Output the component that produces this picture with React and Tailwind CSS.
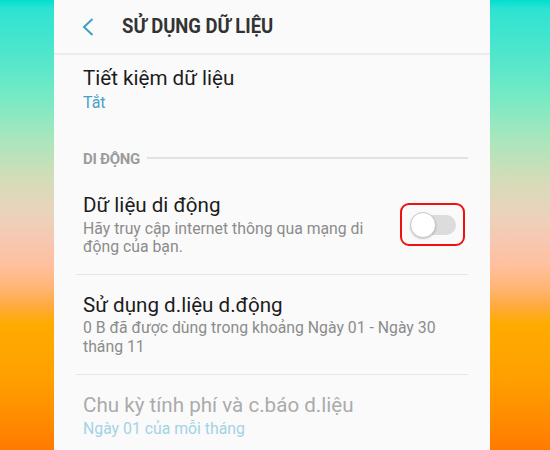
import React from "react";

const sideBg =
  "bg-[linear-gradient(to_bottom,#00dfcf_0%,#2ee3d1_2%,#4fe6cc_12%,#78eac4_22%,#a9e6bd_31%,#d4dcb8_40%,#e9d4bb_47%,#f6c8b3_53%,#ffc09e_59%,#ffb574_64%,#ffab3e_68%,#ffab00_72%,#ffa000_84%,#ff8a00_94%,#ff7a00_100%)]";

const Toggle = () => (
  <div className="w-[65px] h-[43px] border-2 border-[#ee1111] rounded-[9px] flex items-center justify-center">
    <div className="relative w-[46px] h-[26px] flex items-center">
      <div className="ml-[6px] w-[40px] h-[20px] rounded-full bg-[#dcdcdc]" />
      <div className="absolute left-0 top-0 w-[26px] h-[26px] rounded-full bg-white border border-[#c8c8c8] shadow-[0_1px_2px_rgba(0,0,0,0.2)]" />
    </div>
  </div>
);

export default function App() {
  return (
    <div
      className="w-[550px] h-[450px] flex overflow-hidden"
      style={{ fontFamily: "Roboto, 'Noto Sans', sans-serif" }}
    >
      <div className={`w-[54px] h-full ${sideBg}`} />

      <div className="w-[436px] h-full bg-[#fafafa] flex flex-col">
        {/* header */}
        <div className="h-[53px] flex items-center border-b-2 border-[#ececec] box-content">
          <svg
            width="12"
            height="18"
            viewBox="0 0 12 18"
            className="ml-[28px] mt-[1px]"
            fill="none"
            stroke="#3e9fc3"
            strokeWidth="2"
          >
            <path d="M10.5 1 L2 9 L10.5 17" />
          </svg>
          <div className="ml-[28px] text-[21px] font-bold text-[#333] leading-none scale-x-[0.88] origin-left whitespace-nowrap">
            SỬ DỤNG DỮ LIỆU
          </div>
        </div>

        {/* Tiết kiệm dữ liệu */}
        <div className="pl-[29px] pt-[11px]">
          <div className="text-[20.6px] leading-[24px] text-[#1c1c1c]">
            Tiết kiệm dữ liệu
          </div>
          <div className="mt-[3px] text-[16px] leading-[19px] text-[#4a9ec6]">
            Tắt
          </div>
        </div>

        {/* section */}
        <div className="mt-[38px] pl-[29px] pr-[22px] flex items-center gap-[7px]">
          <div className="text-[15px] leading-[18px] font-bold text-[#9c9c9c] whitespace-nowrap tracking-[-0.3px]">
            DI ĐỘNG
          </div>
          <div className="flex-1 h-[2px] bg-[#e2e2e2] -mt-[3px]" />
        </div>

        {/* Dữ liệu di động */}
        <div className="mt-[25px] pl-[29px] pr-[25px] flex items-start justify-between">
          <div>
            <div className="text-[20.6px] leading-[24px] text-[#1c1c1c]">
              Dữ liệu di động
            </div>
            <div className="mt-[3px] text-[15.8px] leading-[18px] text-[#8c8c8c] w-[300px]">
              Hãy truy cập internet thông qua mạng di động của bạn.
            </div>
          </div>
          <div className="mt-[10px]">
            <Toggle />
          </div>
        </div>

        <div className="mx-[22px] mt-[18px] h-px bg-[#e6e6e6]" />

        {/* Sử dụng d.liệu d.động */}
        <div className="pl-[29px] pr-[22px] pt-[18px]">
          <div className="text-[20.6px] leading-[24px] text-[#1c1c1c]">
            Sử dụng d.liệu d.động
          </div>
          <div className="mt-[1px] text-[15.8px] leading-[19px] text-[#8c8c8c]">
            0 B đã được dùng trong khoảng Ngày 01 - Ngày 30
            <br />
            tháng 11
          </div>
        </div>

        <div className="mx-[22px] mt-[18px] h-px bg-[#e6e6e6]" />

        {/* Chu kỳ */}
        <div className="pl-[29px] pt-[18px]">
          <div className="text-[20.6px] leading-[24px] text-[#ababab]">
            Chu kỳ tính phí và c.báo d.liệu
          </div>
          <div className="mt-[2px] text-[15.8px] leading-[19px] text-[#a3d3e5]">
            Ngày 01 của mỗi tháng
          </div>
        </div>
      </div>

      <div className={`flex-1 h-full ${sideBg}`} />
    </div>
  );
}
